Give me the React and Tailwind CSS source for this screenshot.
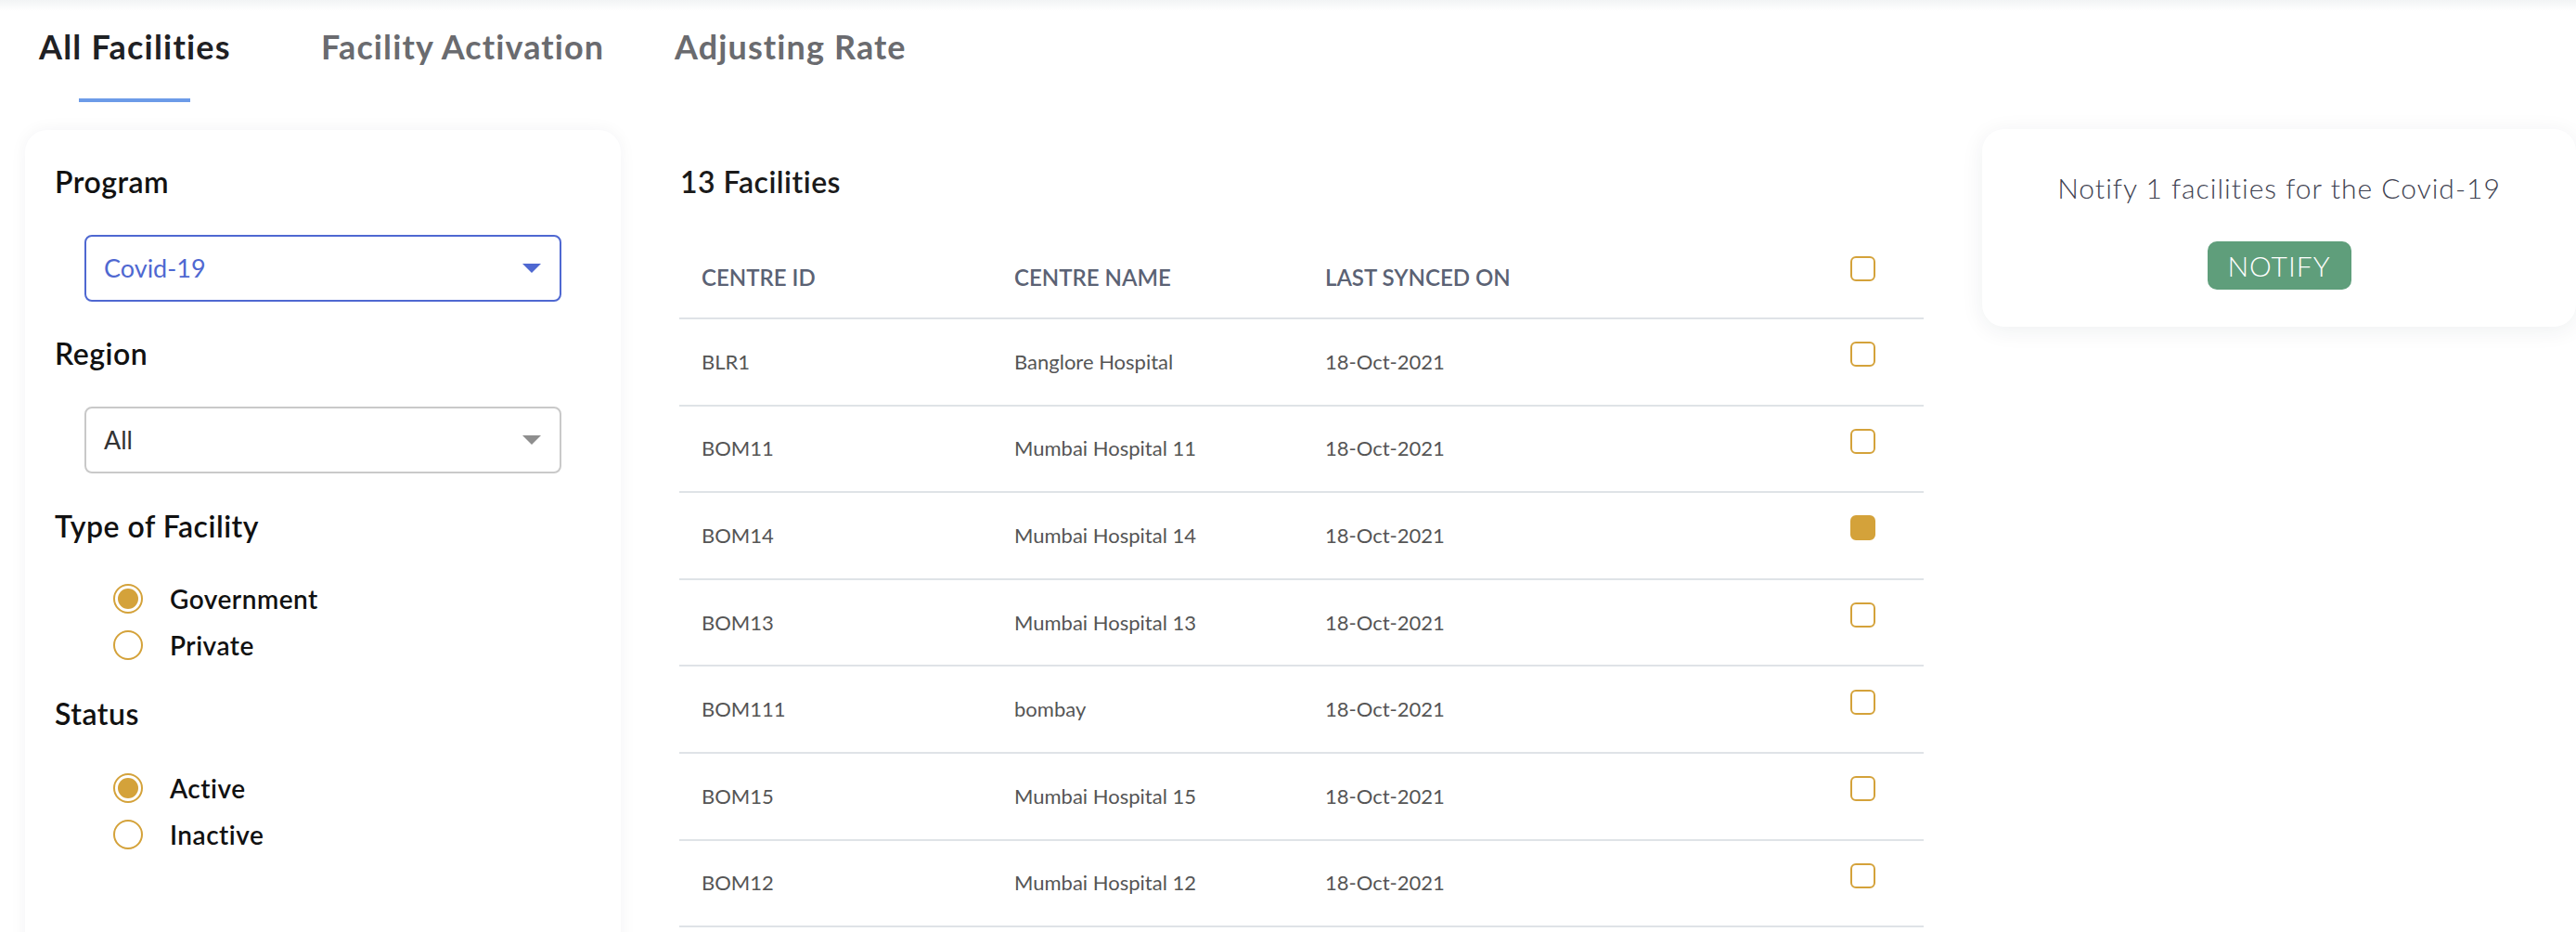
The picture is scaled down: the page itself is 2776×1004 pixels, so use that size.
import React from "react";

const facilities = [
  { id: "BLR1", name: "Banglore Hospital", synced: "18-Oct-2021", checked: false },
  { id: "BOM11", name: "Mumbai Hospital 11", synced: "18-Oct-2021", checked: false },
  { id: "BOM14", name: "Mumbai Hospital 14", synced: "18-Oct-2021", checked: true },
  { id: "BOM13", name: "Mumbai Hospital 13", synced: "18-Oct-2021", checked: false },
  { id: "BOM111", name: "bombay", synced: "18-Oct-2021", checked: false },
  { id: "BOM15", name: "Mumbai Hospital 15", synced: "18-Oct-2021", checked: false },
  { id: "BOM12", name: "Mumbai Hospital 12", synced: "18-Oct-2021", checked: false },
];

const Checkbox = ({ checked, className = "" }) => (
  <span
    className={
      (checked
        ? "bg-[#d4a23a] border-[#d4a23a] "
        : "bg-white border-[#d4a23a] ") +
      "block w-[27px] h-[27px] rounded-[6px] border-2 " +
      className
    }
  />
);

const Radio = ({ label, checked }) => (
  <div className="flex items-center h-[32px]">
    <span className="flex items-center justify-center w-[32px] h-[32px] rounded-full border-2 border-[#d4a23a] p-[3px]">
      {checked && <span className="block w-full h-full rounded-full bg-[#d4a23a]" />}
    </span>
    <span className="ml-[29px] text-[28px] leading-[32px] font-semibold tracking-[0.5px] text-[#111]">{label}</span>
  </div>
);

const Select = ({ value, active }) => (
  <div
    className={
      (active ? "border-[#4f68d1] " : "border-[#c9c9c9] ") +
      "ml-[32px] w-[514px] h-[72px] rounded-[8px] border-2 flex items-center justify-between pl-[19px] pr-[20px]"
    }
  >
    <span
      className={
        (active ? "text-[#4f68d1] " : "text-[#333] ") + "text-[27px] leading-[32px] font-normal"
      }
    >
      {value}
    </span>
    <svg width="20" height="10" viewBox="0 0 20 10">
      <polygon points="0,0 20,0 10,10" fill={active ? "#4f68d1" : "#8e8e8e"} />
    </svg>
  </div>
);

const Label = ({ children, className = "" }) => (
  <div className={"text-[32px] leading-[40px] font-semibold tracking-[0.5px] text-[#111] " + className}>{children}</div>
);

export default function App() {
  return (
    <div className="h-screen overflow-hidden bg-white font-['Lato',sans-serif]">
      <div className="h-[12px] bg-linear-to-b from-[#f2f4f5] to-white" />

      {/* tabs */}
      <div className="flex pt-[16px] pl-[42px]">
        <div className="w-[304px]">
          <div className="inline-flex flex-col items-center">
            <span className="text-[36px] leading-[44px] font-bold tracking-[1.2px] text-[#1f2124]">All Facilities</span>
            <span className="mt-[34px] block w-[120px] h-[4px] bg-[#6c9be8]" />
          </div>
        </div>
        <div className="w-[381px]">
          <span className="text-[36px] leading-[44px] font-bold tracking-[1.1px] text-[#6a6b6f]">Facility Activation</span>
        </div>
        <div>
          <span className="text-[36px] leading-[44px] font-bold tracking-[1.1px] text-[#6a6b6f]">Adjusting Rate</span>
        </div>
      </div>

      <div className="flex items-start mt-[30px] pl-[27px] gap-[63px]">
        {/* filters */}
        <div className="w-[642px] h-[900px] rounded-[24px] bg-white shadow-[0_0_18px_rgba(20,40,60,0.05)] pt-[36px] pl-[32px]">
          <Label>Program</Label>
          <div className="mt-[37px]">
            <Select value="Covid-19" active />
          </div>
          <Label className="mt-[36px]">Region</Label>
          <div className="mt-[37px]">
            <Select value="All" />
          </div>
          <Label className="mt-[37px]">Type of Facility</Label>
          <div className="mt-[42px] ml-[63px] flex flex-col gap-[18px]">
            <Radio label="Government" checked />
            <Radio label="Private" />
          </div>
          <Label className="mt-[38px]">Status</Label>
          <div className="mt-[44px] ml-[63px] flex flex-col gap-[18px]">
            <Radio label="Active" checked />
            <Radio label="Inactive" />
          </div>
        </div>

        {/* table */}
        <div className="w-[1341px] pt-[36px]">
          <div className="pl-[1px] text-[32px] leading-[40px] font-semibold tracking-[0.5px] text-[#1a1a1a]">13 Facilities</div>
          <div className="mt-[40px]">
            <div className="flex items-center h-[88px] border-b-2 border-[#dfe3e7] pl-[24px] text-[24px] leading-[32px] font-semibold text-[#5b6274] uppercase">
              <div className="w-[337px]">Centre ID</div>
              <div className="w-[335px]">Centre Name</div>
              <div className="flex-1">Last Synced On</div>
              <Checkbox className="mr-[52px] mb-[20px]" />
            </div>
            {facilities.map((f) => (
              <div
                key={f.id}
                className="flex items-center h-[93.6px] border-b-2 border-[#dfe3e7] pl-[24px] text-[22px] leading-[28px] font-normal text-[#555]"
              >
                <div className="w-[337px]">{f.id}</div>
                <div className="w-[335px]">{f.name}</div>
                <div className="flex-1">{f.synced}</div>
                <Checkbox checked={f.checked} className="mr-[52px] mb-[16px]" />
              </div>
            ))}
          </div>
        </div>

        {/* notify card */}
        <div className="w-[640px] shrink-0 -mt-[1px] h-[213px] rounded-[24px] bg-white shadow-[0_4px_24px_rgba(20,40,60,0.07)] flex flex-col items-center pt-[45px]">
          <div className="text-[30px] leading-[36px] font-light tracking-[1px] text-[#3e4150]">
            Notify 1 facilities for the Covid-19
          </div>
          <button className="mt-[40px] w-[155px] h-[52px] rounded-[10px] bg-[#5f9e7b] text-white text-[30px] leading-[36px] font-light tracking-[1px]">
            NOTIFY
          </button>
        </div>
      </div>
    </div>
  );
}
